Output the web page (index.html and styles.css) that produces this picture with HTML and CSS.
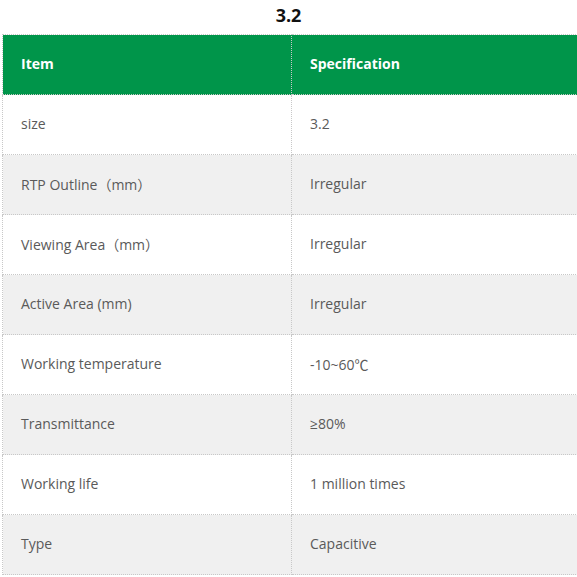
FILE: index.html
```html
<!DOCTYPE html>
<html>
<head>
<meta charset="utf-8">
<link rel="stylesheet" href="styles.css">
</head>
<body>
<div class="page">
  <h2 class="title">3.2</h2>
  <div class="wrap">
    <table class="spec">
      <thead>
        <tr><th>Item</th><th>Specification</th></tr>
      </thead>
      <tbody>
        <tr><td>size</td><td>3.2</td></tr>
        <tr><td>RTP Outline（mm）</td><td>Irregular</td></tr>
        <tr><td>Viewing Area（mm）</td><td>Irregular</td></tr>
        <tr><td>Active Area (mm)</td><td>Irregular</td></tr>
        <tr><td>Working temperature</td><td>-10~60℃</td></tr>
        <tr><td>Transmittance</td><td>≥80%</td></tr>
        <tr><td>Working life</td><td>1 million times</td></tr>
        <tr><td>Type</td><td>Capacitive</td></tr>
      </tbody>
    </table>
  </div>
</div>
</body>
</html>
```
FILE: styles.css
```css
html, body {
  margin: 0;
  padding: 0;
  background: #fff;
  overflow: hidden;
}
.page {
  width: 577px;
  font-family: "Open Sans", "Noto Sans CJK SC", sans-serif;
}
.title {
  margin: 0;
  height: 34px;
  line-height: 30px;
  text-align: center;
  font-size: 18px;
  font-weight: 700;
  color: #111;
}
.wrap {
  padding-left: 2px;
  overflow: hidden;
}
.spec {
  border-collapse: collapse;
  width: 620px;
  table-layout: fixed;
}
.spec th, .spec td {
  border: 1px dotted #c8c8c8;
  height: 60px;
  padding: 0 0 2px 18px;
  text-align: left;
  font-size: 14px;
  box-sizing: border-box;
}
.spec th:first-child, .spec td:first-child {
  width: 289px;
}
.spec th {
  background: #00954a;
  color: #fff;
  font-weight: 700;
}
.spec td {
  color: #5a5a5a;
}
.spec tbody tr:nth-child(even) td {
  background: #f0f0f0;
}
```
